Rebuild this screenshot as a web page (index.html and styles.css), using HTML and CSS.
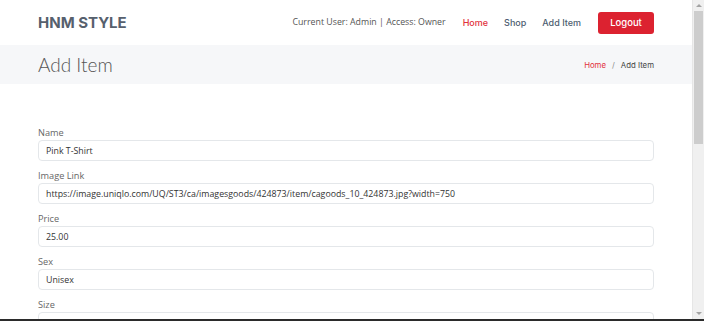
FILE: index.html
```html
<!DOCTYPE html>
<html>
	<head>
		<meta charset="utf-8">
		<title>HNM STYLE - Add Item</title>
		<link rel="stylesheet" href="styles.css">
	</head>
	<body>
		<div class="window">
			<div class="screen">
				<div class="page">
					<header class="topbar">
						<div class="wrap topbar-in">
							<a class="logo" href="#">HNM STYLE</a>
							<nav class="nav">
								<span class="user">Current User: Admin | Access: Owner</span>
								<a class="active" href="#">Home</a>
								<a href="#">Shop</a>
								<a href="#">Add Item</a>
								<a class="btn-logout" href="#">Logout</a>
							</nav>
						</div>
					</header>
					<section class="crumbs">
						<div class="wrap crumbs-in">
							<h2>Add Item</h2>
							<ol>
								<li><a href="#">Home</a></li>
								<li class="sep">/</li>
								<li>Add Item</li>
							</ol>
						</div>
					</section>
					<section class="main">
						<form class="wrap item-form">
							<div class="group">
								<label>Name</label>
								<input type="text" value="Pink T-Shirt">
							</div>
							<div class="group">
								<label>Image Link</label>
								<input type="text" value="https://image.uniqlo.com/UQ/ST3/ca/imagesgoods/424873/item/cagoods_10_424873.jpg?width=750">
							</div>
							<div class="group">
								<label>Price</label>
								<input type="text" value="25.00">
							</div>
							<div class="group">
								<label>Sex</label>
								<input type="text" value="Unisex">
							</div>
							<div class="group">
								<label>Size</label>
								<input type="text" value="Small">
							</div>
						</form>
					</section>
				</div>
				<div class="scrollbar">
					<span class="arrow up"></span>
					<span class="thumb"></span>
					<span class="rest"></span>
					<span class="arrow down"></span>
				</div>
			</div>
			<div class="frame-bottom"></div>
		</div>
	</body>
</html>
```

FILE: styles.css
```css
*{margin:0;padding:0;box-sizing:border-box;}
body{font:10px/1.3 "Open Sans",sans-serif;color:#444;background:#fff;overflow:hidden;}
a{text-decoration:none;}
ol{list-style:none;}

.window{width:704px;height:321px;display:flex;flex-direction:column;}
.screen{flex:1;display:flex;min-height:0;}
.page{flex:1;overflow:hidden;}
.frame-bottom{height:2px;background:#2b2b2b;}

.wrap{width:616px;margin:0 auto;}

/* header */
.topbar{height:45px;background:#fff;}
.topbar-in{height:100%;display:flex;align-items:center;justify-content:space-between;}
.logo{font:700 15px "Inter",sans-serif;color:#56606d;}
.nav{display:flex;align-items:center;}
.nav .user{font-size:8.8px;color:#555;margin-right:17px;}
.nav a{font:500 9px "Inter",sans-serif;color:#4d5d70;margin-right:16px;}
.nav a.active{color:#e2313c;}
.nav a.btn-logout{margin:0 0 0 1px;background:#dc2230;color:#fff;border-radius:3px;width:56px;height:22px;display:flex;align-items:center;justify-content:center;font-size:9.5px;}

/* breadcrumbs */
.crumbs{height:39px;background:#f6f7f9;}
.crumbs-in{height:100%;display:flex;align-items:center;justify-content:space-between;}
.crumbs h2{font:300 19px "Lato",sans-serif;color:#555;}
.crumbs ol{display:flex;font:400 7.8px "Inter",sans-serif;color:#444;}
.crumbs ol a{color:#e2313c;}
.crumbs .sep{color:#888;margin:0 6px;}

/* form */
.main{padding-top:42px;}
.group{margin-bottom:8px;}
.group label{display:block;font-size:9.2px;line-height:13px;color:#666;margin-bottom:1px;}
.group input{display:block;width:100%;height:21px;padding:0 7px;border:1px solid #e4e7ea;border-radius:4px;font:8.8px "Open Sans",sans-serif;color:#333;background:#fff;}

/* fake window scrollbar */
.scrollbar{width:12px;background:#f0f0f0;border-left:1px solid #e6e6e6;display:flex;flex-direction:column;align-items:center;}
.scrollbar .arrow{width:0;height:0;border-left:3px solid transparent;border-right:3px solid transparent;margin:4px 0;}
.scrollbar .up{border-bottom:3px solid #a3a3a3;}
.scrollbar .down{border-top:3px solid #a3a3a3;}
.scrollbar .thumb{width:9px;height:133px;background:#cdcdcd;}
.scrollbar .rest{flex:1;}
```
